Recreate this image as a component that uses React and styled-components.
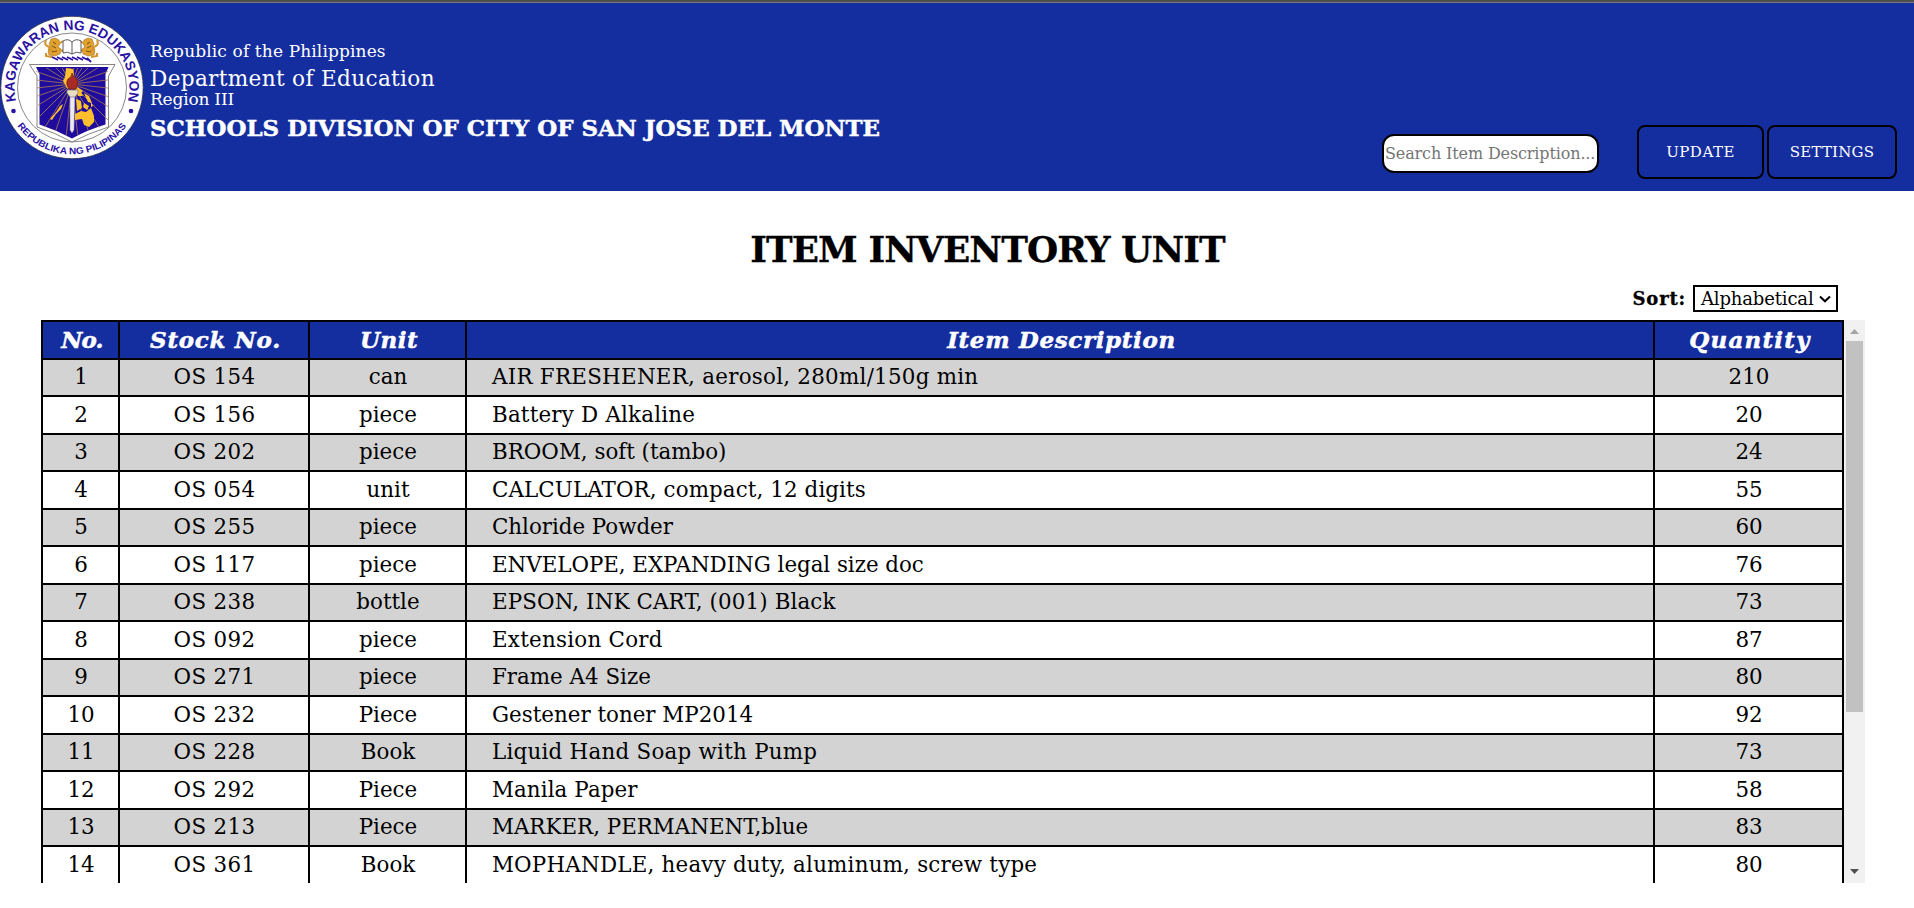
import React from 'react';
import styled, { createGlobalStyle } from 'styled-components';

const BLUE = '#152e9f';
const SERIF = '"Bookman Old Style", "DejaVu Serif", serif';

const GlobalStyle = createGlobalStyle`
  *, *::before, *::after { box-sizing: border-box; }
  html, body { margin: 0; height: 100%; overflow: hidden; background: #fff; }
  body { font-family: ${SERIF}; color: #000; }
`;

const Page = styled.div`
  display: flex;
  flex-direction: column;
  height: 908px;
`;

const Header = styled.header`
  height: 191px;
  background: ${BLUE};
  color: #fff;
  border-top: 2px solid #4f4f4f;
  display: flex;
  box-shadow: inset 0 1px 0 #777;
`;

const Seal = styled.svg`
  width: 144px;
  height: 144px;
  margin-top: 14px;
  flex: none;
`;

const Heading = styled.div`
  display: flex;
  flex-direction: column;
  padding: 37px 0 0 6px;
  flex: 1;
  white-space: nowrap;
`;

const Line = styled.div`
  font-size: ${(p) => p.$size}px;
  line-height: ${(p) => p.$height}px;
  letter-spacing: ${(p) => p.$track || 0}px;
  font-weight: ${(p) => (p.$bold ? 700 : 400)};
  -webkit-text-stroke: ${(p) => (p.$bold ? '0.5px #fff' : '0')};
`;

const Actions = styled.div`
  display: flex;
  align-items: flex-start;
  gap: 3px;
  padding: 123px 17px 0 0;
`;

const Search = styled.input`
  width: 217px;
  height: 39px;
  margin: 9px 35px 0 0;
  padding: 0 1px;
  border: 2px solid #000;
  border-radius: 12px;
  background: #fff;
  font-family: ${SERIF};
  font-size: 16px;
  letter-spacing: -0.13px;
  &::placeholder { color: #757575; opacity: 1; }
`;

const Button = styled.button`
  width: ${(p) => p.$width}px;
  height: 54px;
  padding: 0;
  border: 2px solid #000;
  border-radius: 8px;
  background: transparent;
  color: #fff;
  font-family: ${SERIF};
  font-size: 15px;
  letter-spacing: ${(p) => p.$track}px;
`;

const Title = styled.h1`
  margin: 32px 0 0 61px;
  text-align: center;
  font-size: 35.8px;
  line-height: 52px;
  font-weight: 700;
  letter-spacing: -0.9px;
  -webkit-text-stroke: 0.3px #000;
`;

const SortBar = styled.div`
  display: flex;
  justify-content: flex-end;
  height: 28px;
  margin: 10px 76px 7px 0;
`;

const SortLabel = styled.label`
  font-size: 18px;
  line-height: 28px;
  font-weight: 700;
  letter-spacing: 0.8px;
  margin-right: 7px;
  -webkit-text-stroke: 0.3px #000;
`;

const Select = styled.button`
  display: flex;
  align-items: center;
  justify-content: space-between;
  width: 145px;
  height: 27px;
  padding: 0 5px 0 6px;
  border: 2px solid #000;
  background: #fff;
  color: #000;
  font-family: ${SERIF};
  font-size: 18px;
  letter-spacing: -0.15px;
`;

const Viewport = styled.div`
  display: flex;
  width: 1824px;
  height: 563px;
  margin-left: 41px;
  overflow: hidden;
`;

const Table = styled.table`
  width: 1803px;
  table-layout: fixed;
  border-collapse: separate;
  border-spacing: 0;
  border-right: 2px solid #000;
`;

const Th = styled.th`
  height: 38px;
  padding: 0 0 0 3px;
  border: solid #000;
  border-width: 2px 0 0 2px;
  background: ${BLUE};
  color: #fff;
  font-size: 23px;
  line-height: 30px;
  font-style: italic;
  letter-spacing: ${(p) => p.$track}px;
  -webkit-text-stroke: 0.5px #fff;
`;

const Row = styled.tr`
  height: ${(p) => (p.$shaded ? 37 : 38)}px;
  background: ${(p) => (p.$shaded ? '#d3d3d3' : '#fff')};
  & > td { padding-bottom: ${(p) => (p.$shaded ? 2 : 0)}px; }
`;

const Td = styled.td`
  padding: 0 0 0 ${(p) => (p.$left ? 25 : 1)}px;
  border: solid #000;
  border-width: 2px 0 0 2px;
  text-align: ${(p) => (p.$left ? 'left' : 'center')};
  font-size: 21.4px;
  line-height: 30px;
  white-space: nowrap;
  letter-spacing: ${(p) => p.$track || 0}px;
`;

const Scrollbar = styled.div`
  width: 21px;
  background: #f1f1f1;
  display: flex;
  flex-direction: column;
  align-items: center;
`;

const Arrow = styled.svg`
  width: 21px;
  height: 21px;
  flex: none;
`;

const Thumb = styled.div`
  width: 17px;
  height: 371px;
  margin-bottom: auto;
  background: #c1c1c1;
`;

const columns = [
  ['No.', 77, -0.8],
  ['Stock No.', 190, 0.7],
  ['Unit', 157, 0.5],
  ['Item Description', 1188, 0.65],
  ['Quantity', 189, 1.2],
];

const rows = [
  ['OS 154', 'can', 'AIR FRESHENER, aerosol, 280ml/150g min', 210, 0.26],
  ['OS 156', 'piece', 'Battery D Alkaline', 20, 0.2],
  ['OS 202', 'piece', 'BROOM, soft (tambo)', 24, 0],
  ['OS 054', 'unit', 'CALCULATOR, compact, 12 digits', 55, 0.1],
  ['OS 255', 'piece', 'Chloride Powder', 60, -0.03],
  ['OS 117', 'piece', 'ENVELOPE, EXPANDING legal size doc', 76, -0.04],
  ['OS 238', 'bottle', 'EPSON, INK CART, (001) Black', 73, 0.13],
  ['OS 092', 'piece', 'Extension Cord', 87, 0.26],
  ['OS 271', 'piece', 'Frame A4 Size', 80, 0],
  ['OS 232', 'Piece', 'Gestener toner MP2014', 92, 0],
  ['OS 228', 'Book', 'Liquid Hand Soap with Pump', 73, 0.25],
  ['OS 292', 'Piece', 'Manila Paper', 58, 0.1],
  ['OS 213', 'Piece', 'MARKER, PERMANENT,blue', 83, 0],
  ['OS 361', 'Book', 'MOPHANDLE, heavy duty, aluminum, screw type', 80, 0.21],
];

const rays = Array.from({ length: 28 }, (_, i) => {
  const a = ((i + 0.5) * 2 * Math.PI) / 28;
  return [72 + 70 * Math.cos(a), 68 + 70 * Math.sin(a)];
});

function Lion({ flip }) {
  return (
    <g transform={flip ? 'matrix(-1 0 0 1 143 0)' : undefined}>
      <path d="M51 23 l4-1 4 2 1 4 -2 3 3 2 -1 5 -5 2 -6-1 -1-4 3-3 -2-4z" fill="#e2a02c" stroke="#8d6420" strokeWidth=".5" />
      <path d="M46 24 q-2 4 1 6 l4 2 M60 27 l3-2 M48 33 l5 2 M60 34 l3 1 M46 37 l0 3 6 1" fill="none" stroke="#d4942a" strokeWidth="2" />
      <path d="M53 26 l3 2 M52 30 l4 2 M52 36 l5-1" fill="none" stroke="#72501c" strokeWidth="1" />
    </g>
  );
}

function DepEdSeal() {
  return (
    <Seal viewBox="0 0 144 144">
      <defs>
        <path id="arcTop" d="M16 84.500 A57.500 57.500 0 1 1 128 84.500" />
        <path id="arcBottom" d="M8.500 92 A66.700 66.700 0 0 0 135.500 92" />
        <clipPath id="shield"><path d="M36 52 H108 V109 Q88 114 72 122 Q56 114 39 109z" /></clipPath>
      </defs>
      <circle cx="72" cy="71.500" r="71.200" fill="#fff" stroke="#30324c" strokeWidth=".8" />
      <circle cx="72" cy="71.500" r="54.500" fill="#fff" stroke="#555" strokeWidth=".7" />
      <g fill="#2a12a4" fontFamily='"Liberation Sans", Arial, sans-serif' fontWeight="700">
        <text fontSize="13.800" textAnchor="middle">
          <textPath href="#arcTop" startOffset="50%" textLength="208" lengthAdjust="spacingAndGlyphs">KAGAWARAN NG EDUKASYON</textPath>
        </text>
        <text fontSize="9.300" textAnchor="middle">
          <textPath href="#arcBottom" startOffset="50%" textLength="128" lengthAdjust="spacingAndGlyphs">REPUBLIKA NG PILIPINAS</textPath>
        </text>
        <circle cx="13.500" cy="95" r="2.300" />
        <circle cx="131" cy="95" r="2.300" />
      </g>
      <Lion />
      <Lion flip />
      <path d="M63 25 q5-3 9 1 q4-4 9-1 v12 q-5-2-9 1 q-4-3-9-1z M72 26 v12" fill="#fff" stroke="#333" strokeWidth=".8" />
      <path d="M52 41 l6 3 M57 41 l6 3 M62 41 l6 3 M67 41 l6 3 M72 41 l6 3 M77 41 l6 3 M82 41 l6 3 M87 42 l4 4" stroke="#2a12a4" strokeWidth="1.800" />
      <path d="M29.500 48.500 H115 L108.500 60 V111 Q89 117 72 126 Q54 116 37 111 V60z" fill="#fff" stroke="#666" strokeWidth=".8" />
      <path d="M36 51 H108.500 L105.500 58 V108.500 Q87 114 72 122.500 Q56 114 39.500 108.500 V58z" fill="#1f0b9c" />
      <g clipPath="url(#shield)" stroke="#a8804e" strokeWidth=".8">
        {rays.map(([x, y], i) => <path key={i} d={`M72 68 L${x.toFixed(1)} ${y.toFixed(1)}`} />)}
      </g>
      <g fill="#fdbf2d">
        <path d="M66 52 l7 1 1 6 -1 7 4 5 6 4 -2 2 -7-4 -7-1 -4-7 2-4z" />
        <path d="M63 88 l-2 5 -5 5 -4 6 -2-1 6-7 4-6z" />
        <path d="M75 74 l6 2 2 4 -5 0z M84 77 l5 3 3 7 -4-1z M76 83 l5 2 1 7 -5 3z M84 87 l5 3 -2 4 -4-3z M91 86 l2 4 -2 1z" />
        <path d="M75 98 l6-3 5 1 5-4 3 8 0 6 -5 5 -5-2 -2-6 -7 1z" />
      </g>
      <path d="M70 77 h5 l-1 37 -2 3 -2-3z" fill="#ece9f0" stroke="#77718f" strokeWidth=".5" />
      <path d="M67 74 h11 v3 l-3 4 h-5 l-3-4z" fill="#e6dfc4" stroke="#696171" strokeWidth=".6" />
      <path d="M72 57 q2 5 5 6 q2 4-1 10 h-7 q-4-6-1-10 q4-2 4-6z" fill="#a92a24" stroke="#671b24" strokeWidth=".7" />
    </Seal>
  );
}

export default function App() {
  return (
    <>
      <GlobalStyle />
      <Page>
        <Header>
          <DepEdSeal />
          <Heading>
            <Line $size={17} $height={24} $track={0.13}>Republic of the Philippines</Line>
            <Line $size={21.6} $height={31} $track={0.33}>Department of Education</Line>
            <Line $size={17} $height={11} $track={-0.2}>Region III</Line>
            <Line $size={22.95} $height={45} $bold>SCHOOLS DIVISION OF CITY OF SAN JOSE DEL MONTE</Line>
          </Heading>
          <Actions>
            <Search placeholder="Search Item Description..." />
            <Button $width={127} $track={0.5}>UPDATE</Button>
            <Button $width={130} $track={0.2}>SETTINGS</Button>
          </Actions>
        </Header>
        <Title>ITEM INVENTORY UNIT</Title>
        <SortBar>
          <SortLabel>Sort:</SortLabel>
          <Select>
            <span>Alphabetical</span>
            <svg width="12" height="8" viewBox="0 0 12 8"><path d="M1 1.500 L6 6.300 L11 1.500" fill="none" stroke="#000" strokeWidth="2" /></svg>
          </Select>
        </SortBar>
        <Viewport>
          <Table>
            <colgroup>
              {columns.map(([name, width]) => <col key={name} width={width} />)}
            </colgroup>
            <thead>
              <tr>{columns.map(([name, , track]) => <Th key={name} $track={track}>{name}</Th>)}</tr>
            </thead>
            <tbody>
              {rows.map(([stock, unit, item, qty, track], i) => (
                <Row key={stock} $shaded={i % 2 === 0}>
                  <Td>{i + 1}</Td>
                  <Td $track={0.35}>{stock}</Td>
                  <Td>{unit}</Td>
                  <Td $left $track={track}>{item}</Td>
                  <Td>{qty}</Td>
                </Row>
              ))}
            </tbody>
          </Table>
          <Scrollbar>
            <Arrow viewBox="0 0 21 21"><path d="M6 14 L10.500 9 L15 14z" fill="#a3a3a3" /></Arrow>
            <Thumb />
            <Arrow viewBox="0 0 21 21"><path d="M6 7 L10.500 12 L15 7z" fill="#505050" /></Arrow>
          </Scrollbar>
        </Viewport>
      </Page>
    </>
  );
}
